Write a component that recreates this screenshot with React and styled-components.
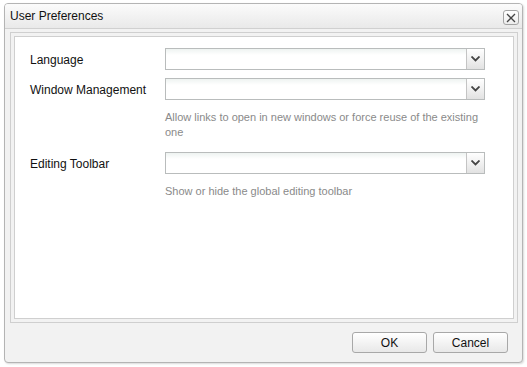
import styled, { createGlobalStyle } from "styled-components";

const GlobalStyle = createGlobalStyle`
  html, body {
    margin: 0;
    padding: 0;
    background: #ffffff;
  }
  body {
    font-family: "Liberation Sans", Arial, sans-serif;
    font-size: 12px;
    color: #000;
  }
`;

const fields = [
  { label: "Language" },
  {
    label: "Window Management",
    help: "Allow links to open in new windows or force reuse of the existing one",
  },
  { label: "Editing Toolbar", help: "Show or hide the global editing toolbar" },
];

const Chevron = () => (
  <svg width="9" height="6" viewBox="0 0 9 6">
    <path d="M0.5 0.5 L4.5 4.5 L8.5 0.5" fill="none" stroke="#444" strokeWidth="1.8" />
  </svg>
);

const CloseIcon = () => (
  <svg width="10" height="10" viewBox="0 0 10 10">
    <path d="M1 1 L9 9 M9 1 L1 9" stroke="#444" strokeWidth="1.3" />
  </svg>
);

const App = () => {
  return (
    <Page>
      <GlobalStyle />
      <Window>
        <Header>
          <Title>User Preferences</Title>
          <CloseButton>
            <CloseIcon />
          </CloseButton>
        </Header>
        <Body>
          <Frame>
            <Form>
              {fields.map((f) => (
                <Field key={f.label} $hasHelp={!!f.help}>
                  <Row>
                    <Label>{f.label}</Label>
                    <Combo>
                      <ComboInput />
                      <Trigger>
                        <Chevron />
                      </Trigger>
                    </Combo>
                  </Row>
                  {f.help && <Help>{f.help}</Help>}
                </Field>
              ))}
            </Form>
          </Frame>
        </Body>
        <Footer>
          <Button>OK</Button>
          <Button>Cancel</Button>
        </Footer>
      </Window>
    </Page>
  );
};

const Page = styled.div`
  padding: 3px 0 0 4px;
  width: 527px;
  height: 367px;
  box-sizing: border-box;
`;

const Window = styled.div`
  width: 519px;
  height: 360px;
  box-sizing: border-box;
  border: 1px solid #b4b4b4;
  border-radius: 4px;
  background: #f2f2f2;
  box-shadow: 1px 1px 2px rgba(0, 0, 0, 0.15);
  display: flex;
  flex-direction: column;
  overflow: hidden;
`;

const Header = styled.div`
  height: 24px;
  flex: none;
  display: flex;
  align-items: center;
  justify-content: space-between;
  padding: 0 3px 0 5px;
  background: linear-gradient(#fbfbfb, #e9e9e9);
  border-bottom: 1px solid #d0d0d0;
`;

const Title = styled.span`
  font-size: 12px;
  color: #111;
`;

const CloseButton = styled.div`
  width: 14px;
  height: 13px;
  margin-top: 3px;
  border: 1px solid #a4a4a4;
  border-radius: 3px;
  background: linear-gradient(#ffffff, #ececec);
  display: flex;
  align-items: center;
  justify-content: center;
`;

const Body = styled.div`
  flex: 1;
  padding: 3px 4px 0 5px;
  display: flex;
`;

const Frame = styled.div`
  flex: 1;
  border: 1px solid #cfcfcf;
  padding: 3px;
  display: flex;
`;

const Form = styled.div`
  flex: 1;
  background: #fff;
  border: 1px solid #cfcfcf;
  padding: 11px 0 0 15px;
`;

const Field = styled.div`
  margin-bottom: ${(p) => (p.$hasHelp ? "12px" : "8px")};
`;

const Row = styled.div`
  display: grid;
  grid-template-columns: 135px 320px;
  align-items: center;
`;

const Label = styled.div`
  font-size: 12px;
  color: #111;
  padding-top: 2px;
`;

const Combo = styled.div`
  height: 22px;
  box-sizing: border-box;
  border: 1px solid #b9bcbc;
  display: flex;
`;

const ComboInput = styled.div`
  flex: 1;
  background: linear-gradient(#eef3f1, #ffffff 6px);
`;

const Trigger = styled.div`
  width: 17px;
  border-left: 1px solid #c4c4c4;
  background: linear-gradient(#ffffff, #e2e2e2);
  display: flex;
  align-items: center;
  justify-content: center;
`;

const Help = styled.div`
  margin: 10px 0 0 135px;
  width: 320px;
  font-size: 11px;
  line-height: 15px;
  color: #8a8a8a;
`;

const Footer = styled.div`
  height: 39px;
  flex: none;
  display: flex;
  justify-content: flex-end;
  align-items: flex-start;
  gap: 6px;
  padding: 9px 14px 0 0;
  box-sizing: border-box;
`;

const Button = styled.div`
  width: 75px;
  height: 21px;
  box-sizing: border-box;
  border: 1px solid #a8a8a8;
  border-radius: 3px;
  background: linear-gradient(#ffffff, #e8e8e8);
  display: flex;
  align-items: center;
  justify-content: center;
  font-size: 12px;
  color: #111;
`;

export default App;
